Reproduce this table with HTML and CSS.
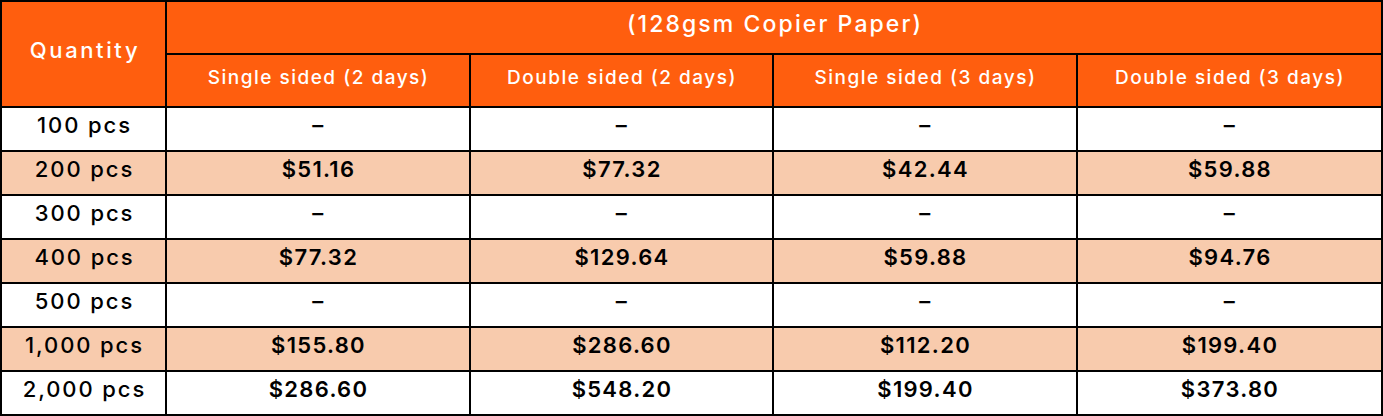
FILE: index.html
```html
<!DOCTYPE html>
<html>
<head>
<meta charset="utf-8">
<link rel="stylesheet" href="styles.css">
</head>
<body>
<div class="price-table">
  <div class="cell head qty">Quantity</div>
  <div class="cell head title">(128gsm Copier Paper)</div>
  <div class="cell head sub">Single sided (2 days)</div>
  <div class="cell head sub">Double sided (2 days)</div>
  <div class="cell head sub">Single sided (3 days)</div>
  <div class="cell head sub">Double sided (3 days)</div>

  <div class="cell q">100 pcs</div><div class="cell p">–</div><div class="cell p">–</div><div class="cell p">–</div><div class="cell p">–</div>
  <div class="cell q alt">200 pcs</div><div class="cell p alt">$51.16</div><div class="cell p alt">$77.32</div><div class="cell p alt">$42.44</div><div class="cell p alt">$59.88</div>
  <div class="cell q">300 pcs</div><div class="cell p">–</div><div class="cell p">–</div><div class="cell p">–</div><div class="cell p">–</div>
  <div class="cell q alt">400 pcs</div><div class="cell p alt">$77.32</div><div class="cell p alt">$129.64</div><div class="cell p alt">$59.88</div><div class="cell p alt">$94.76</div>
  <div class="cell q">500 pcs</div><div class="cell p">–</div><div class="cell p">–</div><div class="cell p">–</div><div class="cell p">–</div>
  <div class="cell q alt">1,000 pcs</div><div class="cell p alt">$155.80</div><div class="cell p alt">$286.60</div><div class="cell p alt">$112.20</div><div class="cell p alt">$199.40</div>
  <div class="cell q">2,000 pcs</div><div class="cell p">$286.60</div><div class="cell p">$548.20</div><div class="cell p">$199.40</div><div class="cell p">$373.80</div>
</div>
</body>
</html>
```

FILE: styles.css
```css
html, body {
  margin: 0;
  padding: 0;
  background: #ffffff;
}

.price-table {
  width: 1383px;
  height: 416px;
  box-sizing: border-box;
  display: grid;
  grid-template-columns: 163px 302px 301px 302px 303px;
  grid-template-rows: 51px 51px repeat(7, 42px);
  gap: 2px;
  padding: 2px;
  background: #000000;
  font-family: "Inter", "Liberation Sans", sans-serif;
  color: #000000;
}

.cell {
  display: flex;
  align-items: center;
  justify-content: center;
  background: #ffffff;
  white-space: nowrap;
  box-sizing: border-box;
}

.head {
  background: #ff5e0e;
  color: #ffffff;
  font-weight: 500;
}

.qty {
  grid-row: 1 / span 2;
  font-size: 22px;
  letter-spacing: 2.6px;
  padding-left: 3px;
  padding-bottom: 8px;
}

.title {
  grid-column: 2 / span 4;
  font-size: 23px;
  letter-spacing: 2.1px;
  padding-left: 2px;
  padding-bottom: 8px;
}

.sub {
  font-size: 19px;
  letter-spacing: 1.5px;
  padding-left: 1px;
  padding-bottom: 7px;
}

.q {
  font-size: 22px;
  font-weight: 500;
  letter-spacing: 1.9px;
  padding-left: 2px;
  padding-bottom: 9px;
}

.p {
  font-size: 22px;
  font-weight: 600;
  letter-spacing: 1.3px;
  padding-left: 1px;
  padding-bottom: 8px;
}

.alt {
  background: #f8cbad;
}
```
